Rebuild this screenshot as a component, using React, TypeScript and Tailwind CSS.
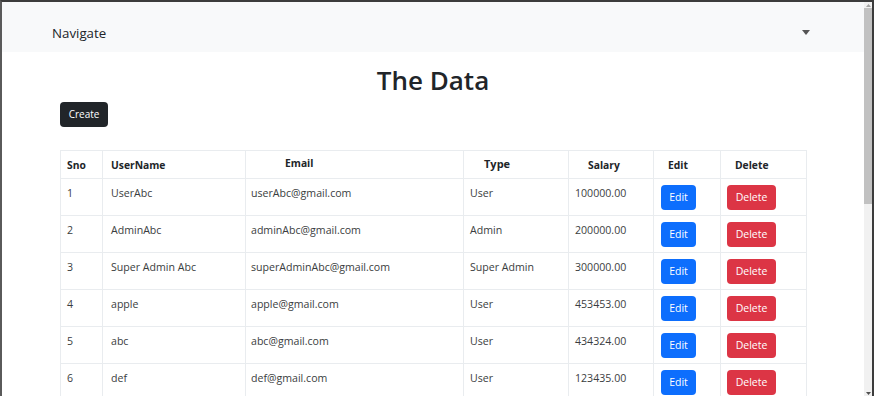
import React from 'react'

const rows = [
  { sno: 1, name: 'UserAbc', email: 'userAbc@gmail.com', type: 'User', salary: '100000.00' },
  { sno: 2, name: 'AdminAbc', email: 'adminAbc@gmail.com', type: 'Admin', salary: '200000.00' },
  { sno: 3, name: 'Super Admin Abc', email: 'superAdminAbc@gmail.com', type: 'Super Admin', salary: '300000.00' },
  { sno: 4, name: 'apple', email: 'apple@gmail.com', type: 'User', salary: '453453.00' },
  { sno: 5, name: 'abc', email: 'abc@gmail.com', type: 'User', salary: '434324.00' },
  { sno: 6, name: 'def', email: 'def@gmail.com', type: 'User', salary: '123435.00' },
]

const cell = 'border border-[#e9ecef] px-[6px] pt-[6px] align-top text-[10.6px] leading-[17px] text-[#3a3d40]'
const head = 'border border-[#e9ecef] px-[6px] pt-[3px] align-middle text-[10.3px] font-bold text-[#212529]'

export default function App() {
  return (
    <div
      className="flex h-[396px] w-[874px] overflow-hidden border-t-2 border-l-2 border-t-[#3c3c3c] border-l-[#5a5a5a] bg-white"
      style={{ fontFamily: '"Open Sans", "Noto Sans", sans-serif' }}
    >
      <div className="flex min-w-0 flex-1 flex-col">
        {/* Navbar */}
        <nav className="flex h-[50px] shrink-0 items-center justify-between bg-[#f8f9fa] pt-[13px] pl-[50px] pr-[54px]">
          <span className="text-[13.3px] text-[#212529]">Navigate</span>
          <svg width="8" height="5" viewBox="0 0 8 5" className="mb-[3px]">
            <path d="M0 0h8L4 5z" fill="#555" />
          </svg>
        </nav>

        <div className="px-[58px]">
          <h1 className="mt-[8px] text-center text-[26px] leading-[40px] font-semibold text-[#212529]">The Data</h1>
          <button className="mt-[-3px] h-[25px] w-[48px] rounded-[4px] bg-[#212529] text-[10px] text-white">
            Create
          </button>

          <table className="mt-[23px] table-fixed border-collapse" style={{ width: 746 }}>
            <colgroup>
              <col style={{ width: 42 }} />
              <col style={{ width: 143 }} />
              <col style={{ width: 218 }} />
              <col style={{ width: 105 }} />
              <col style={{ width: 85 }} />
              <col style={{ width: 67 }} />
              <col style={{ width: 86 }} />
            </colgroup>
            <thead>
              <tr className="h-[28px] text-left">
                <th className={head}>Sno</th>
                <th className={`${head} pl-[8px]`}>UserName</th>
                <th className={`${head} pt-0 pb-[4px] pl-[39px] text-[8.5px]`}>Email</th>
                <th className={`${head} pt-0 pb-[4px] pl-[20px] text-[11px]`}>Type</th>
                <th className={`${head} pl-[19px]`}>Salary</th>
                <th className={`${head} pl-[14px]`}>Edit</th>
                <th className={`${head} pl-[14px]`}>Delete</th>
              </tr>
            </thead>
            <tbody>
              {rows.map((r) => (
                <tr key={r.sno} className="h-[37px]">
                  <td className={cell}>{r.sno}</td>
                  <td className={`${cell} pl-[8px]`}>{r.name}</td>
                  <td className={`${cell} pl-[5px]`}>{r.email}</td>
                  <td className={cell}>{r.type}</td>
                  <td className={cell}>{r.salary}</td>
                  <td className={`${cell} pl-[7px]`}>
                    <button className="h-[25px] w-[35px] rounded-[4px] bg-[#0d6efd] text-[10.5px] text-white">Edit</button>
                  </td>
                  <td className={cell}>
                    <button className="h-[25px] w-[49px] rounded-[4px] bg-[#dc3545] text-[10.5px] text-white">Delete</button>
                  </td>
                </tr>
              ))}
            </tbody>
          </table>
        </div>
      </div>

      {/* Scrollbar */}
      <div className="flex w-[8px] shrink-0 flex-col bg-[#f1f1f1]">
        <div className="flex h-[6px] items-center justify-center">
          <svg width="5" height="3" viewBox="0 0 5 3"><path d="M0 3h5L2.5 0z" fill="#a3a3a3" /></svg>
        </div>
        <div className="h-[196px] bg-[#c1c1c1]" />
        <div className="flex-1" />
        <div className="flex h-[6px] items-center justify-center">
          <svg width="5" height="3" viewBox="0 0 5 3"><path d="M0 0h5L2.5 3z" fill="#505050" /></svg>
        </div>
      </div>
      <div className="w-[2px] shrink-0 bg-[#3c3c3c]" />
    </div>
  )
}
